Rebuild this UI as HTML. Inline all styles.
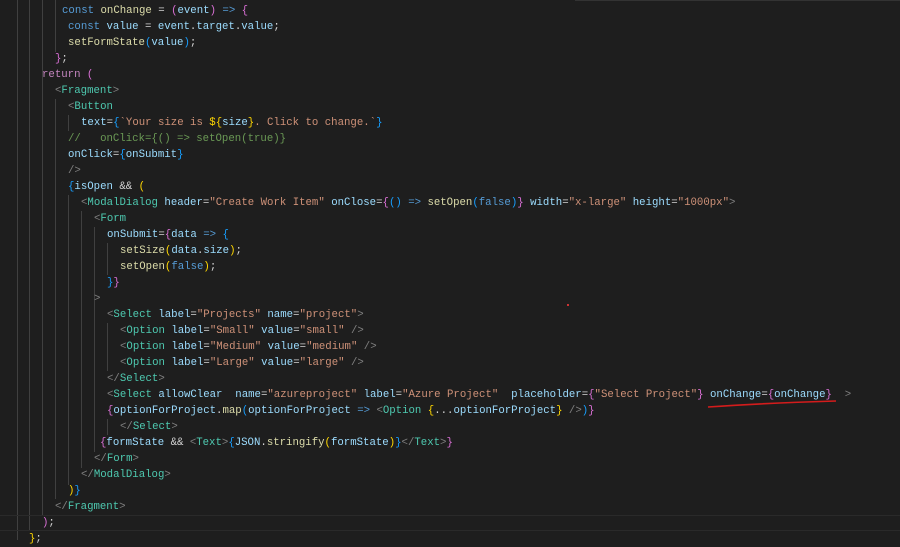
<!DOCTYPE html>
<html><head><meta charset="utf-8"><style>
body{margin:0;width:900px;height:540px;background:#1e1e1e;overflow:hidden;position:relative;font-family:Consolas,"Liberation Mono",monospace;font-size:10.7px;color:#d4d4d4}
.l{position:absolute;white-space:pre;line-height:16px;height:16px}
.k{color:#569cd6}.r{color:#c586c0}.v{color:#9cdcfe}.f{color:#dcdcaa}.s{color:#ce9178}.t{color:#4ec9b0}.g{color:#808080}.c{color:#6a9955}.y{color:#ffd700}.p{color:#da70d6}.b{color:#179fff}
.gd{position:absolute;width:1px;background:#404040}
</style></head><body>
<div class="gd" style="left:17px;top:0;height:540px"></div>
<div class="gd" style="left:29px;top:0;height:530px"></div>
<div class="gd" style="left:42px;top:0;height:515px"></div>
<div class="gd" style="left:55px;top:0;height:52px"></div>
<div class="gd" style="left:55px;top:99px;height:400px"></div>
<div class="gd" style="left:68px;top:115px;height:16px"></div>
<div class="gd" style="left:68px;top:195px;height:290px"></div>
<div class="gd" style="left:81px;top:211px;height:257px"></div>
<div class="gd" style="left:94px;top:227px;height:225px"></div>
<div class="gd" style="left:107px;top:243px;height:32px"></div>
<div class="gd" style="left:107px;top:323px;height:48px"></div>
<div class="gd" style="left:107px;top:419px;height:16px"></div>
<div style="position:absolute;left:0;top:515px;width:900px;height:16px;border-top:1px solid #2a2a2a;border-bottom:1px solid #2a2a2a;box-sizing:border-box"></div>
<div style="position:absolute;left:575px;top:0;width:325px;height:1px;background:#333"></div>

<div class="l" style="left:60px;top:-13px"><span class="p">}</span><span class="y">)</span>;</div>
<div class="l" style="left:62px;top:3px"><span class="k">const</span> <span class="f">onChange</span> = <span class="p">(</span><span class="v">event</span><span class="p">)</span> <span class="k">=&gt;</span> <span class="p">{</span></div>
<div class="l" style="left:68px;top:19px"><span class="k">const</span> <span class="v">value</span> = <span class="v">event</span>.<span class="v">target</span>.<span class="v">value</span>;</div>
<div class="l" style="left:68px;top:35px"><span class="f">setFormState</span><span class="b">(</span><span class="v">value</span><span class="b">)</span>;</div>
<div class="l" style="left:55px;top:51px"><span class="p">}</span>;</div>
<div class="l" style="left:42px;top:67px"><span class="r">return</span> <span class="p">(</span></div>
<div class="l" style="left:55px;top:83px"><span class="g">&lt;</span><span class="t">Fragment</span><span class="g">&gt;</span></div>
<div class="l" style="left:68px;top:99px"><span class="g">&lt;</span><span class="t">Button</span></div>
<div class="l" style="left:81px;top:115px"><span class="v">text</span>=<span class="b">{</span><span class="s">`Your size is </span><span class="y">${</span><span class="v">size</span><span class="y">}</span><span class="s">. Click to change.`</span><span class="b">}</span></div>
<div class="l" style="left:68px;top:131px"><span class="c">//   onClick={() =&gt; setOpen(true)}</span></div>
<div class="l" style="left:68px;top:147px"><span class="v">onClick</span>=<span class="b">{</span><span class="v">onSubmit</span><span class="b">}</span></div>
<div class="l" style="left:68px;top:163px"><span class="g">/&gt;</span></div>
<div class="l" style="left:68px;top:179px"><span class="b">{</span><span class="v">isOpen</span> &amp;&amp; <span class="y">(</span></div>
<div class="l" style="left:81px;top:195px"><span class="g">&lt;</span><span class="t">ModalDialog</span> <span class="v">header</span>=<span class="s">"Create Work Item"</span> <span class="v">onClose</span>=<span class="p">{</span><span class="b">()</span> <span class="k">=&gt;</span> <span class="f">setOpen</span><span class="b">(</span><span class="k">false</span><span class="b">)</span><span class="p">}</span> <span class="v">width</span>=<span class="s">"x-large"</span> <span class="v">height</span>=<span class="s">"1000px"</span><span class="g">&gt;</span></div>
<div class="l" style="left:94px;top:211px"><span class="g">&lt;</span><span class="t">Form</span></div>
<div class="l" style="left:107px;top:227px"><span class="v">onSubmit</span>=<span class="p">{</span><span class="v">data</span> <span class="k">=&gt;</span> <span class="b">{</span></div>
<div class="l" style="left:120px;top:243px"><span class="f">setSize</span><span class="y">(</span><span class="v">data</span>.<span class="v">size</span><span class="y">)</span>;</div>
<div class="l" style="left:120px;top:259px"><span class="f">setOpen</span><span class="y">(</span><span class="k">false</span><span class="y">)</span>;</div>
<div class="l" style="left:107px;top:275px"><span class="b">}</span><span class="p">}</span></div>
<div class="l" style="left:94px;top:291px"><span class="g">&gt;</span></div>
<div style="position:absolute;left:567px;top:304px;width:2px;height:2px;background:#c33"></div>
<div class="l" style="left:107px;top:307px"><span class="g">&lt;</span><span class="t">Select</span> <span class="v">label</span>=<span class="s">"Projects"</span> <span class="v">name</span>=<span class="s">"project"</span><span class="g">&gt;</span></div>
<div class="l" style="left:120px;top:323px"><span class="g">&lt;</span><span class="t">Option</span> <span class="v">label</span>=<span class="s">"Small"</span> <span class="v">value</span>=<span class="s">"small"</span> <span class="g">/&gt;</span></div>
<div class="l" style="left:120px;top:339px"><span class="g">&lt;</span><span class="t">Option</span> <span class="v">label</span>=<span class="s">"Medium"</span> <span class="v">value</span>=<span class="s">"medium"</span> <span class="g">/&gt;</span></div>
<div class="l" style="left:120px;top:355px"><span class="g">&lt;</span><span class="t">Option</span> <span class="v">label</span>=<span class="s">"Large"</span> <span class="v">value</span>=<span class="s">"large"</span> <span class="g">/&gt;</span></div>
<div class="l" style="left:107px;top:371px"><span class="g">&lt;/</span><span class="t">Select</span><span class="g">&gt;</span></div>
<div class="l" style="left:107px;top:387px"><span class="g">&lt;</span><span class="t">Select</span> <span class="v">allowClear</span>  <span class="v">name</span>=<span class="s">"azureproject"</span> <span class="v">label</span>=<span class="s">"Azure Project"</span>  <span class="v">placeholder</span>=<span class="p">{</span><span class="s">"Select Project"</span><span class="p">}</span> <span class="v">onChange</span>=<span class="p">{</span><span class="v">onChange</span><span class="p">}</span>  <span class="g">&gt;</span></div>
<svg style="position:absolute;left:705px;top:399px" width="135" height="10"><path d="M3 8 Q60 4 131 2" stroke="#d41c1c" stroke-width="1.6" fill="none"/></svg>
<div class="l" style="left:107px;top:403px"><span class="p">{</span><span class="v">optionForProject</span>.<span class="f">map</span><span class="b">(</span><span class="v">optionForProject</span> <span class="k">=&gt;</span> <span class="g">&lt;</span><span class="t">Option</span> <span class="y">{</span>...<span class="v">optionForProject</span><span class="y">}</span> <span class="g">/&gt;</span><span class="b">)</span><span class="p">}</span></div>
<div class="l" style="left:120px;top:419px"><span class="g">&lt;/</span><span class="t">Select</span><span class="g">&gt;</span></div>
<div class="l" style="left:100px;top:435px"><span class="p">{</span><span class="v">formState</span> &amp;&amp; <span class="g">&lt;</span><span class="t">Text</span><span class="g">&gt;</span><span class="b">{</span><span class="v">JSON</span>.<span class="f">stringify</span><span class="y">(</span><span class="v">formState</span><span class="y">)</span><span class="b">}</span><span class="g">&lt;/</span><span class="t">Text</span><span class="g">&gt;</span><span class="p">}</span></div>
<div class="l" style="left:94px;top:451px"><span class="g">&lt;/</span><span class="t">Form</span><span class="g">&gt;</span></div>
<div class="l" style="left:81px;top:467px"><span class="g">&lt;/</span><span class="t">ModalDialog</span><span class="g">&gt;</span></div>
<div class="l" style="left:68px;top:483px"><span class="y">)</span><span class="b">}</span></div>
<div class="l" style="left:55px;top:499px"><span class="g">&lt;/</span><span class="t">Fragment</span><span class="g">&gt;</span></div>
<div class="l" style="left:42px;top:515px"><span class="p">)</span>;</div>
<div class="l" style="left:29px;top:531px"><span class="y">}</span>;</div>
</body></html>
